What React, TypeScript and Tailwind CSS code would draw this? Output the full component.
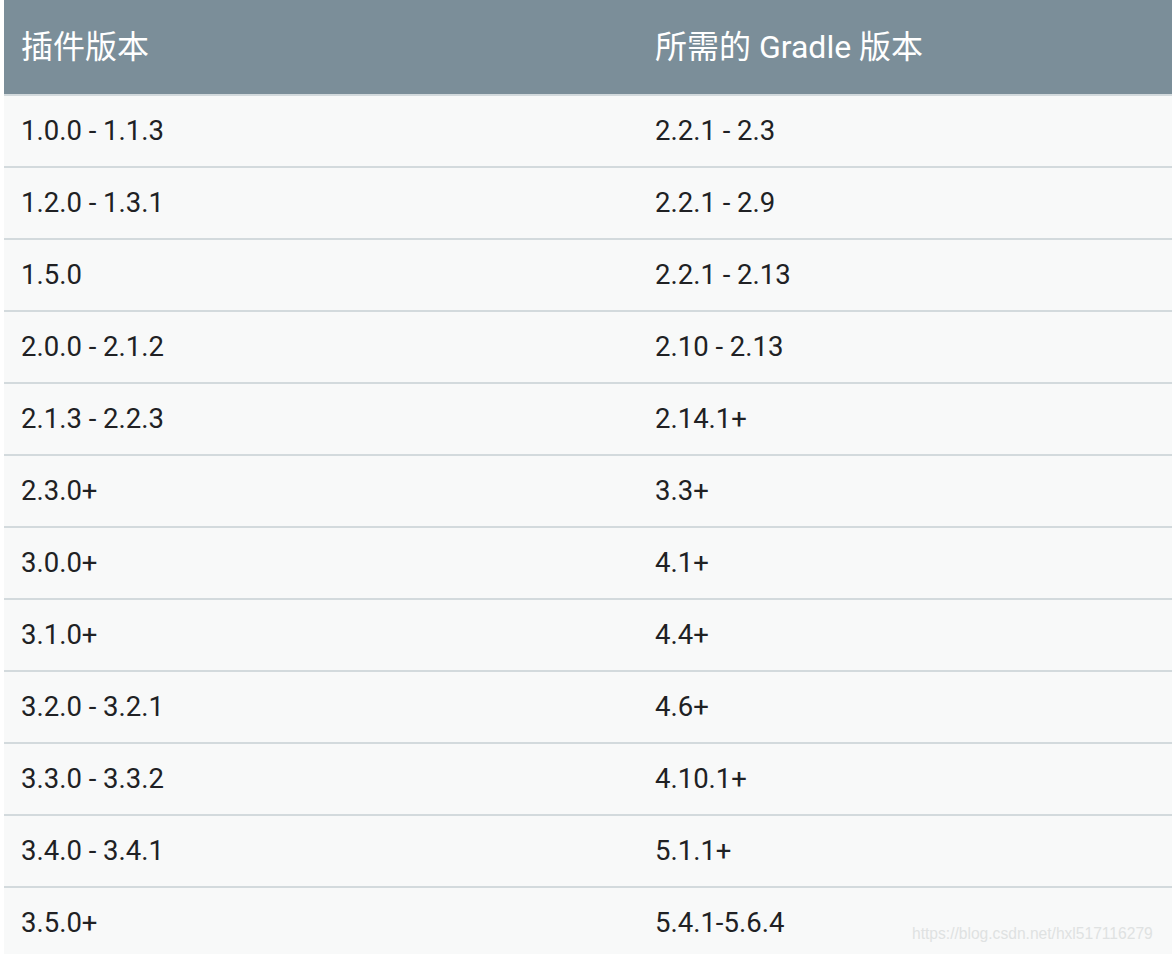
import React from 'react';

const rows: [string, string][] = [
  ['1.0.0 - 1.1.3', '2.2.1 - 2.3'],
  ['1.2.0 - 1.3.1', '2.2.1 - 2.9'],
  ['1.5.0', '2.2.1 - 2.13'],
  ['2.0.0 - 2.1.2', '2.10 - 2.13'],
  ['2.1.3 - 2.2.3', '2.14.1+'],
  ['2.3.0+', '3.3+'],
  ['3.0.0+', '4.1+'],
  ['3.1.0+', '4.4+'],
  ['3.2.0 - 3.2.1', '4.6+'],
  ['3.3.0 - 3.3.2', '4.10.1+'],
  ['3.4.0 - 3.4.1', '5.1.1+'],
  ['3.5.0+', '5.4.1-5.6.4'],
];

export default function App() {
  return (
    <div
      className="w-[1172px] h-[954px] overflow-hidden bg-white pl-[4px]"
      style={{ fontFamily: 'Roboto, "Noto Sans CJK SC", sans-serif' }}
    >
      <table className="w-[1268px] border-collapse table-fixed">
        <thead>
          <tr className="bg-[#7b8e99] h-[95px] border-b-2 border-[#d3dadd]">
            <th className="w-[634px] pl-[17px] text-left align-middle text-[32px] font-normal text-white">
              插件版本
            </th>
            <th className="w-[634px] pl-[17px] text-left align-middle text-[32px] font-normal text-white">
              所需的 Gradle 版本
            </th>
          </tr>
        </thead>
        <tbody>
          {rows.map(([plugin, gradle], i) => (
            <tr key={i} className="h-[72px] bg-[#f8f9f9] border-b-2 border-[#d3dadd]">
              <td className="pl-[17px] align-middle text-[27.5px] text-[#202124]">{plugin}</td>
              <td className="relative pl-[17px] align-middle text-[27.5px] text-[#202124]">
                {gradle}
                {i === rows.length - 1 && (
                  <span
                    className="absolute left-[274px] top-[38px] text-[15.6px] leading-none text-[#dfe2e2]"
                    style={{ fontFamily: '"Liberation Sans", Arial, sans-serif' }}
                  >
                    https://blog.csdn.net/hxl517116279
                  </span>
                )}
              </td>
            </tr>
          ))}
        </tbody>
      </table>
    </div>
  );
}
